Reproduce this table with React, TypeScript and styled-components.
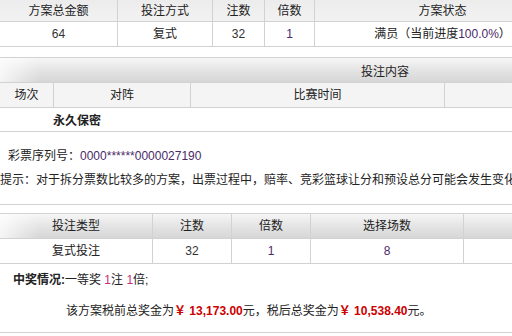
import React from "react";
import styled, {createGlobalStyle} from "styled-components";

const GlobalStyle = createGlobalStyle`
  html, body {
    margin: 0;
    padding: 0;
    background: #fff;
    overflow: hidden;
  }
  body {
    font-family: "Liberation Sans", "Noto Sans CJK SC", sans-serif;
    font-size: 12px;
    color: #222;
  }
`;

const Page = styled.div`
  width: 770px;
  display: flex;
  flex-direction: column;
`;

const Table = styled.div<{ $gap?: number }>`
  display: flex;
  flex-direction: column;
  margin-top: ${p => p.$gap || 0}px;
`;

const Row = styled.div<{ $cols: string, $h: number, $bg?: string, $top?: boolean }>`
  display: grid;
  grid-template-columns: ${p => p.$cols};
  height: ${p => p.$h}px;
  background: ${p => p.$bg || "#fff"};
  border-bottom: 1px solid #d2d2d2;
  border-top: ${p => p.$top ? "1px solid #d2d2d2" : "none"};
`;

const Cell = styled.div<{ $bold?: boolean }>`
  display: flex;
  align-items: center;
  justify-content: center;
  line-height: 14px;
  white-space: nowrap;
  font-weight: ${p => p.$bold ? "bold" : "normal"};

  & + & {
    border-left: 1px solid #d2d2d2;
  }
`;

const GRADIENT = "linear-gradient(to right, rgba(255,255,255,0.75), rgba(255,255,255,0) 40px), linear-gradient(to bottom, #f6f6f6, #e6e6e6 45%, #d6d6d6)";

const SectionHead = styled.div`
  height: 24px;
  display: flex;
  align-items: center;
  justify-content: center;
  background: ${GRADIENT};
  border-top: 1px solid #d2d2d2;
  border-bottom: 1px solid #d2d2d2;
  margin-top: 10px;
`;

const SecretRow = styled.div`
  height: 23px;
  display: flex;
  align-items: center;
  padding-left: 53px;
  font-weight: bold;
  border-bottom: 1px solid #d2d2d2;
`;

const Notes = styled.div`
  height: 72px;
  display: flex;
  flex-direction: column;
  justify-content: center;
  gap: 10px;
  border-bottom: 1px solid #d2d2d2;
`;

const Line = styled.div<{ $indent?: number }>`
  height: 14px;
  line-height: 14px;
  padding-left: ${p => p.$indent || 0}px;
  white-space: nowrap;
`;

const Num = styled.span<{ $color?: string }>`
  color: ${p => p.$color || "#333"};
`;

const Summary = styled.div`
  height: 69px;
  display: flex;
  flex-direction: column;
  padding-top: 9px;
  gap: 17px;
  box-sizing: border-box;
  border-bottom: 1px solid #d2d2d2;
`;

const Label = styled.b`
  font-weight: bold;
`;

const Money = styled.b`
  color: #cc0000;
  font-weight: bold;
`;

const TOP_COLS = "117px 95px 52px 50px 256px 1fr";
const SUB_COLS = "53px 137px 254px 1fr";
const TYPE_COLS = "152px 79px 79px 153px 1fr";

const App: React.FC = () => {
    return (
        <Page>
            <GlobalStyle/>
            <Table>
                <Row $cols={TOP_COLS} $h={21} $bg="linear-gradient(to bottom, #ececec, #f2f2f2)">
                    <Cell>方案总金额</Cell>
                    <Cell>投注方式</Cell>
                    <Cell>注数</Cell>
                    <Cell>倍数</Cell>
                    <Cell>方案状态</Cell>
                    <Cell/>
                </Row>
                <Row $cols={TOP_COLS} $h={24}>
                    <Cell><Num>64</Num></Cell>
                    <Cell>复式</Cell>
                    <Cell><Num>32</Num></Cell>
                    <Cell><Num $color="#4a2a68">1</Num></Cell>
                    <Cell>满员（当前进度<Num $color="#4a2a68">100.0%</Num>）</Cell>
                    <Cell/>
                </Row>
            </Table>

            <SectionHead>投注内容</SectionHead>
            <Row $cols={SUB_COLS} $h={24} $bg="#f4f4f4">
                <Cell>场次</Cell>
                <Cell>对阵</Cell>
                <Cell>比赛时间</Cell>
                <Cell/>
            </Row>
            <SecretRow>永久保密</SecretRow>
            <Notes>
                <Line $indent={8}>彩票序列号：<Num $color="#4a2a68">0000******0000027190</Num></Line>
                <Line>提示：对于拆分票数比较多的方案，出票过程中，赔率、竞彩篮球让分和预设总分可能会发生变化</Line>
            </Notes>

            <Table $gap={8}>
                <Row $cols={TYPE_COLS} $h={24} $bg={GRADIENT} $top>
                    <Cell>投注类型</Cell>
                    <Cell>注数</Cell>
                    <Cell>倍数</Cell>
                    <Cell>选择场数</Cell>
                    <Cell/>
                </Row>
                <Row $cols={TYPE_COLS} $h={24}>
                    <Cell>复式投注</Cell>
                    <Cell><Num>32</Num></Cell>
                    <Cell><Num $color="#4a2a68">1</Num></Cell>
                    <Cell><Num $color="#4a2a68">8</Num></Cell>
                    <Cell/>
                </Row>
            </Table>

            <Summary>
                <Line $indent={13}>
                    <Label>中奖情况:</Label>一等奖 <Num $color="#c8307a">1</Num>注 <Num $color="#c8307a">1</Num>倍;
                </Line>
                <Line $indent={66}>
                    该方案税前总奖金为<Money>￥ 13,173.00</Money>元，税后总奖金为<Money>￥ 10,538.40</Money>元。
                </Line>
            </Summary>
        </Page>
    );
};

export default App;
